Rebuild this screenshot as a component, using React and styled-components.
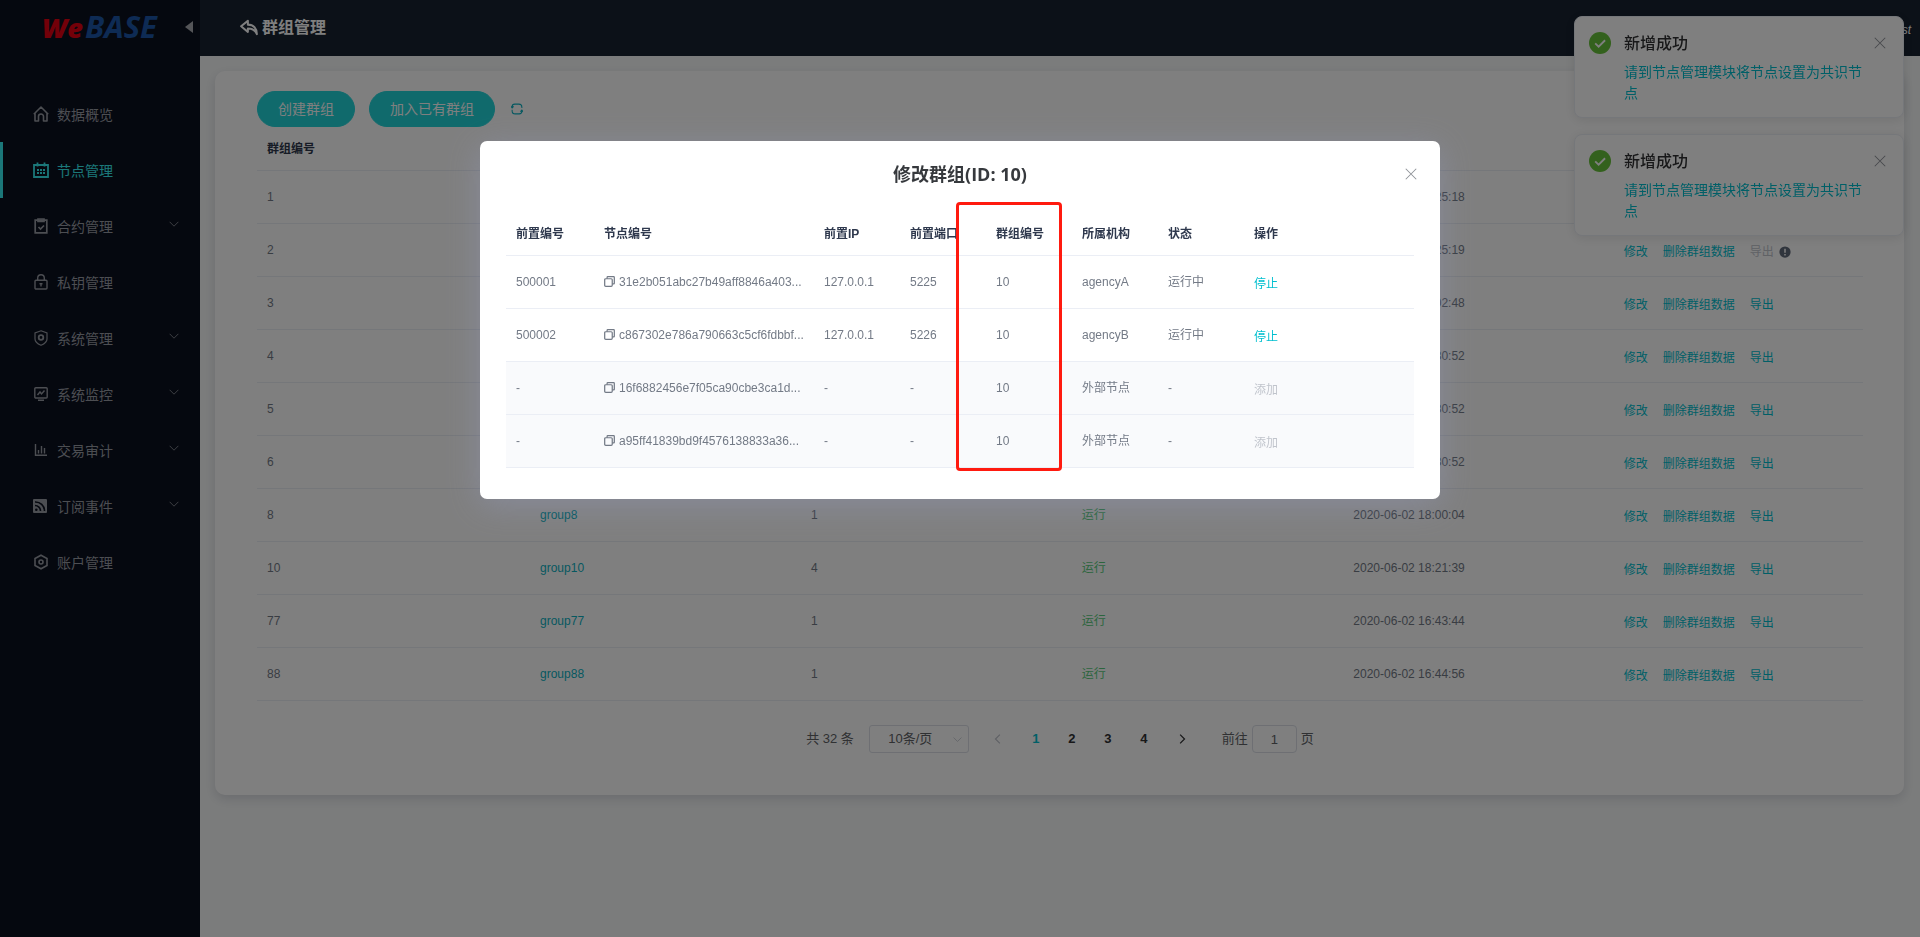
import React from 'react';
import styled, { createGlobalStyle } from 'styled-components';

const GlobalStyle = createGlobalStyle`
	* {
		box-sizing: border-box;
	}

	body {
		margin: 0;
		background: #f7f9f9;
		color: #36393d;
		font-family: 'Liberation Sans', 'Noto Sans CJK SC', sans-serif;
		font-size: 14px;
	}

	button,
	input,
	select {
		font-family: inherit;
		line-height: 20px;
	}

	a {
		text-decoration: none;
	}
`;

const Page = styled.div`
	display: flex;
	min-height: 100vh;
`;

const Sidebar = styled.aside`
	flex: 0 0 200px;
	background: #0a101e;
`;

const Brand = styled.div`
	display: flex;
	align-items: center;
	justify-content: space-between;
	height: 56px;
	padding: 0 7px 2px 40px;
`;

const Logo = styled.svg`
	display: block;
	width: 122px;
	height: 44px;
	font-family: 'Open Sans', sans-serif;
	font-style: italic;
`;

const CollapseButton = styled.button`
	display: flex;
	padding: 0;
	border: 0;
	background: none;
`;

const Menu = styled.nav`
	display: flex;
	flex-direction: column;
	padding-top: 30px;
`;

const MenuItem = styled.a`
	display: flex;
	align-items: center;
	height: 56px;
	padding: 0 21px 0 30px;
	border-left: 3px solid ${(props) => (props.$active ? '#37eef2' : 'transparent')};
	color: ${(props) => (props.$active ? '#37eef2' : '#999ca5')};

	svg {
		display: block;
	}
`;

const MenuLabel = styled.span`
	flex: 1;
	margin-left: 8px;
`;

const MenuArrow = styled.span`
	padding-bottom: 5px;
`;

const Main = styled.div`
	flex: 1;
	min-width: 0;
`;

const Header = styled.header`
	display: flex;
	align-items: center;
	justify-content: space-between;
	height: 56px;
	padding: 0 9px 0 40px;
	background: #182230;
	color: #fff;
`;

const HeaderTitle = styled.h1`
	display: flex;
	align-items: center;
	gap: 4px;
	margin: 0;
	font-size: 16px;
	font-weight: 700;
	line-height: 24px;
`;

const UserName = styled.span`
	padding-top: 3px;
	font-size: 12px;
	font-style: italic;
`;

const Card = styled.section`
	margin: 15px 16px 15px 15px;
	padding: 20px 41px 42px 42px;
	border-radius: 10px;
	background: #fff;
	box-shadow: 0 4px 12px rgba(20, 20, 60, 0.14);
`;

const Toolbar = styled.div`
	display: flex;
	align-items: center;
	gap: 14px;
`;

const RoundButton = styled.button`
	height: 36px;
	padding: 0 20px;
	border: 1px solid #20d4d9;
	border-radius: 20px;
	background: #20d4d9;
	color: #fff;
	font-size: 14px;
`;

const IconButton = styled.button`
	display: flex;
	padding: 2px;
	border: 0;
	background: none;
	color: ${(props) => props.$color || '#909399'};
`;

const Table = styled.table`
	width: 100%;
	border-collapse: separate;
	border-spacing: 0;
	table-layout: fixed;
	color: #737a86;
	font-size: 12px;
	line-height: 22px;
`;

const HeadCell = styled.th`
	height: ${(props) => (props.$short ? 42 : 44)}px;
	padding: 0 10px;
	border-bottom: 1px solid #ebeef5;
	color: #2e384d;
	font-weight: 700;
	text-align: left;
	white-space: nowrap;
`;

const Cell = styled.td`
	height: 53px;
	padding: 0 10px;
	border-bottom: 1px solid #ebeef5;
	white-space: nowrap;
`;

const Row = styled.tr`
	background: ${(props) => (props.$shaded ? '#f9fafc' : 'transparent')};
`;

const GroupLink = styled.a`
	color: #0db1c1;
`;

const Running = styled.span`
	color: #58cb7d;
`;

const TimeText = styled.span`
	display: inline-block;
	min-width: 112px;
	text-align: right;
`;

const Actions = styled.div`
	display: flex;
	align-items: center;
	gap: 15px;
	padding-top: 4px;
`;

const TextButton = styled.button`
	padding: 0;
	border: 0;
	background: none;
	color: #00bfcf;
	font-size: 12px;

	&:disabled {
		color: #c0c4cc;
	}
`;

const ExportGroup = styled.span`
	display: flex;
	align-items: center;
	gap: 5px;
`;

const Pager = styled.div`
	display: flex;
	align-items: center;
	justify-content: center;
	margin-top: 24px;
	color: #606266;
	font-size: 13px;
	line-height: 28px;
`;

const SizePicker = styled.span`
	display: grid;
	align-items: center;
	width: 100px;
	margin: 0 9px 0 15px;

	> * {
		grid-area: 1 / 1;
	}

	> svg {
		justify-self: end;
		margin-right: 7px;
	}
`;

const SizeSelect = styled.select`
	width: 100%;
	height: 28px;
	padding: 0 25px 0 8px;
	border: 1px solid #dcdfe6;
	border-radius: 3px;
	background: #fff;
	color: #606266;
	font-size: 13px;
	text-align: center;
	text-align-last: center;
	appearance: none;
`;

const PageButton = styled.button`
	display: flex;
	align-items: center;
	justify-content: center;
	width: ${(props) => (props.$arrow ? 40 : 36)}px;
	height: 28px;
	padding: 0;
	border: 0;
	background: none;
	color: ${(props) => (props.$active ? '#00bfcf' : '#303133')};
	font-size: 13px;
	font-weight: 700;

	&:disabled {
		color: #c0c4cc;
	}
`;

const Jumper = styled.label`
	display: flex;
	align-items: center;
	gap: 4px;
	margin-left: 20px;
`;

const JumperInput = styled.input`
	width: 45px;
	height: 28px;
	padding: 0 3px;
	border: 1px solid #dcdfe6;
	border-radius: 4px;
	background: #fff;
	color: #606266;
	font-size: 13px;
	text-align: center;
`;

const Notices = styled.div`
	position: fixed;
	top: 16px;
	right: 16px;
	display: flex;
	flex-direction: column;
	gap: 16px;
	width: 330px;
`;

const Notice = styled.div`
	display: flex;
	align-items: flex-start;
	padding: 15px 15px 13px 14px;
	border: 1px solid #ebeef5;
	border-radius: 8px;
	background: #fff;
	box-shadow: 0 2px 12px rgba(0, 0, 0, 0.1);
`;

const NoticeBody = styled.div`
	flex: 1;
	margin: 0 8px 0 13px;
`;

const NoticeTitle = styled.h2`
	margin: 0;
	color: #303133;
	font-size: 16px;
	font-weight: 500;
	line-height: 24px;
`;

const NoticeText = styled.p`
	margin: 6px 0 0;
	color: #00bfcf;
	font-size: 14px;
	line-height: 21px;
`;

const NoticeClose = styled(IconButton)`
	margin-top: 3px;
`;

const Overlay = styled.div`
	position: fixed;
	inset: 0;
	background: rgba(0, 0, 0, 0.5);
`;

const Dialog = styled.div`
	position: relative;
	width: 50%;
	margin: 15vh auto 0;
	padding: 20px 26px 31px;
	border-radius: 7px;
	background: #fff;
	box-shadow: 0 6px 32px rgba(160, 170, 220, 0.3);
`;

const DialogHeader = styled.div`
	display: grid;
	grid-template-columns: 16px 1fr 16px;
	align-items: center;
	height: 26px;
	margin: 0 -5px 27px;
`;

const DialogTitle = styled.h2`
	grid-column: 2;
	margin: 0;
	color: #36393d;
	font-family: 'Open Sans', 'Noto Sans CJK SC', sans-serif;
	font-size: 18px;
	font-weight: 700;
	line-height: 26px;
	text-align: center;
`;

const NodeId = styled.span`
	display: flex;
	align-items: center;
	gap: 4px;
`;

/* Marks the group id column, drawn over the dialog's table. */
const ColumnMark = styled.div`
	position: absolute;
	top: 61px;
	left: 476px;
	width: 106px;
	height: 269px;
	border: 3px solid #ff1a0f;
	border-radius: 4px;
`;

const Svg = ({ size = 16, children, ...rest }) => (
	<svg width={size} height={size} viewBox="0 0 16 16" fill="none" stroke="currentColor" strokeWidth="1.4" aria-hidden="true" {...rest}>
		{children}
	</svg>
);

const HomeIcon = () => (
	<Svg>
		<path d="M.8 8.200 8 1l7.200 7.200M2 7v8h3.500v-4.500a2.500 2.500 0 0 1 5 0V15H14V7" strokeLinejoin="round" strokeWidth="1.600" />
	</Svg>
);

const NodeIcon = () => (
	<Svg strokeWidth="1.800">
		<path d="M1 3h14v12H1zM4.500 .5v4M11.500 .5v4" />
		<path d="M4 8h2M7 8h2M10 8h2M4 11h2M7 11h2M10 11h2" strokeWidth="2" />
	</Svg>
);

const ContractIcon = () => (
	<Svg>
		<path d="M2.200 2.200h11.600v12.600H2.200z" strokeWidth="1.700" />
		<path d="M5 1h6v2.500H5zM5.500 9l2 2 3.500-3.500" strokeWidth="1.700" />
	</Svg>
);

const KeyIcon = () => (
	<Svg>
		<rect x="2" y="6.300" width="12" height="8.700" rx="1" />
		<path d="M4.700 6.500V4a3.300 3.300 0 0 1 6.600 0v2.500M6.500 9.700h3M8 9.500v3" />
	</Svg>
);

const ShieldIcon = () => (
	<Svg strokeWidth="1.200">
		<path d="M8 .8 14 3v6c0 3-3 5-6 6.300C5 14 2 12 2 9V3z" />
		<circle cx="8" cy="7.500" r="2.300" strokeWidth="1.800" />
	</Svg>
);

const MonitorIcon = () => (
	<Svg>
		<rect x="1.800" y="1.700" width="12.400" height="10.300" rx="1" />
		<path d="M4.500 9 7 6l1.500 2L11.500 4.500M5 14.300h6" />
	</Svg>
);

const AuditIcon = () => (
	<Svg>
		<path d="M2.500 2v11.300H14M5.500 11.500V8M8.500 11.500V4M11.500 11.500V6" />
	</Svg>
);

const FeedIcon = () => (
	<Svg stroke="none">
		<rect x="0" y="1" width="14" height="14" rx="1" fill="currentColor" />
		<circle cx="3.300" cy="11.800" r="1.300" fill="#0a101e" />
		<path d="M2 7.500a5.500 5.500 0 0 1 5.500 5.500M2 4a9 9 0 0 1 9.500 9" stroke="#0a101e" strokeWidth="1.600" />
	</Svg>
);

const AccountIcon = () => (
	<Svg>
		<path d="M8 1.200 14 4.500v7L8 14.800 2 11.500v-7z" strokeWidth="1.600" />
		<circle cx="8" cy="8" r="2" strokeWidth="1.600" />
	</Svg>
);

const ChevronDown = ({ size = 10, color = '#8b8e96' }) => (
	<Svg size={size} stroke={color}>
		<path d="m1 4.500 7 7 7-7" />
	</Svg>
);

const BackIcon = () => (
	<Svg size={18}>
		<path d="M7 1.500 1 6.500l6 5V8.500c4 0 6.500 1.500 8 5 0-5-3-8.500-8-8.500z" strokeLinejoin="round" strokeWidth="1.800" />
	</Svg>
);

const RefreshIcon = () => (
	<Svg size={12} strokeWidth="1.400">
		<path d="M1.500 6.500V5q0-3.500 3.500-3.500h5.500a4 4 0 0 1 4 4v1M14.500 9.500V11q0 3.500-3.500 3.500H5.500a4 4 0 0 1-4-4V9M0 4.500l1.500 2 2-2M16 11.500l-1.500-2-2 2" />
	</Svg>
);

const CloseIcon = () => (
	<Svg size={12}>
		<path d="m1 1 14 14M15 1 1 15" />
	</Svg>
);

const CopyIcon = () => (
	<Svg size={11} stroke="#737a86" strokeWidth="1.800">
		<rect x="1" y="4" width="11" height="11" rx="1.500" />
		<path d="M4.500 4V2q0-1 1-1h8.500q1 0 1 1v8.500q0 1-1 1h-2" />
	</Svg>
);

const SuccessIcon = () => (
	<Svg size={22} stroke="none">
		<circle cx="8" cy="8" r="8" fill="#67c23a" />
		<path d="m4.500 8.200 2.500 2.500 4.700-4.700" stroke="#fff" strokeWidth="1.300" />
	</Svg>
);

const WarnIcon = () => (
	<Svg size={12} stroke="none">
		<circle cx="8" cy="8" r="7.500" fill="#606a7a" />
		<path d="M8 3.500v5.500M8 10.500v2" stroke="#fff" strokeWidth="2" />
	</Svg>
);

const menu = [
	{ label: '数据概览', Icon: HomeIcon },
	{ label: '节点管理', Icon: NodeIcon, active: true },
	{ label: '合约管理', Icon: ContractIcon, nested: true },
	{ label: '私钥管理', Icon: KeyIcon },
	{ label: '系统管理', Icon: ShieldIcon, nested: true },
	{ label: '系统监控', Icon: MonitorIcon, nested: true },
	{ label: '交易审计', Icon: AuditIcon, nested: true },
	{ label: '订阅事件', Icon: FeedIcon, nested: true },
	{ label: '账户管理', Icon: AccountIcon },
];

/* Rows 1 to 6 sit behind the dialog, which leaves only the end of the time in view. */
const groups = [
	{ id: 1, time: '25:18' },
	{ id: 2, time: '25:19', locked: true },
	{ id: 3, time: '02:48' },
	{ id: 4, time: '30:52' },
	{ id: 5, time: '30:52' },
	{ id: 6, time: '30:52' },
	{ id: 8, name: 'group8', nodes: 1, time: '2020-06-02 18:00:04' },
	{ id: 10, name: 'group10', nodes: 4, time: '2020-06-02 18:21:39' },
	{ id: 77, name: 'group77', nodes: 1, time: '2020-06-02 16:43:44' },
	{ id: 88, name: 'group88', nodes: 1, time: '2020-06-02 16:44:56' },
];

const nodes = [
	{ front: '500001', node: '31e2b051abc27b49aff8846a403...', ip: '127.0.0.1', port: '5225', agency: 'agencyA', status: '运行中', action: '停止' },
	{ front: '500002', node: 'c867302e786a790663c5cf6fdbbf...', ip: '127.0.0.1', port: '5226', agency: 'agencyB', status: '运行中', action: '停止' },
	{ front: '-', node: '16f6882456e7f05ca90cbe3ca1d...', ip: '-', port: '-', agency: '外部节点', status: '-', action: '添加', external: true },
	{ front: '-', node: 'a95ff41839bd9f4576138833a36...', ip: '-', port: '-', agency: '外部节点', status: '-', action: '添加', external: true },
];

const SideNav = () => (
	<Sidebar>
		<Brand>
			<Logo viewBox="0 0 122 44" role="img" aria-label="WeBASE">
				<text x="2" y="33" fill="#e60012" fontSize="27" fontWeight="800">
					We
				</text>
				<text x="45" y="33" fill="#1c57a8" fontSize="31" fontWeight="700">
					BASE
				</text>
			</Logo>
			<CollapseButton aria-label="收起">
				<svg width="8" height="12" viewBox="0 0 8 12" aria-hidden="true">
					<path d="M8 0v12L0 6z" fill="#a9abb0" />
				</svg>
			</CollapseButton>
		</Brand>
		<Menu>
			{menu.map(({ label, Icon, active, nested }) => (
				<MenuItem key={label} href="#" $active={active}>
					<Icon />
					<MenuLabel>{label}</MenuLabel>
					{nested && (
						<MenuArrow>
							<ChevronDown />
						</MenuArrow>
					)}
				</MenuItem>
			))}
		</Menu>
	</Sidebar>
);

const GroupTable = () => (
	<Table>
		<colgroup>
			<col style={{ width: '17%' }} />
			<col style={{ width: '16.87%' }} />
			<col style={{ width: '16.87%' }} />
			<col style={{ width: '16.87%' }} />
			<col style={{ width: '16.87%' }} />
			<col />
		</colgroup>
		<thead>
			<tr>
				<HeadCell>群组编号</HeadCell>
				<HeadCell colSpan={5} />
			</tr>
		</thead>
		<tbody>
			{groups.map((group) => (
				<tr key={group.id}>
					<Cell>{group.id}</Cell>
					<Cell>{group.name && <GroupLink href="#">{group.name}</GroupLink>}</Cell>
					<Cell>{group.nodes}</Cell>
					<Cell>{group.name && <Running>运行</Running>}</Cell>
					<Cell>
						<TimeText>{group.time}</TimeText>
					</Cell>
					<Cell>
						{group.id !== 1 && (
							<Actions>
								<TextButton>修改</TextButton>
								<TextButton>删除群组数据</TextButton>
								<ExportGroup>
									<TextButton disabled={group.locked}>导出</TextButton>
									{group.locked && <WarnIcon />}
								</ExportGroup>
							</Actions>
						)}
					</Cell>
				</tr>
			))}
		</tbody>
	</Table>
);

const Pagination = () => (
	<Pager>
		<span>共 32 条</span>
		<SizePicker>
			<SizeSelect aria-label="每页条数" defaultValue="10">
				<option value="10">10条/页</option>
			</SizeSelect>
			<ChevronDown size={9} color="#c0c4cc" />
		</SizePicker>
		<PageButton $arrow disabled aria-label="上一页">
			<Svg size={10} strokeWidth="2">
				<path d="M11 1 4 8l7 7" />
			</Svg>
		</PageButton>
		{[1, 2, 3, 4].map((page) => (
			<PageButton key={page} $active={page === 1}>
				{page}
			</PageButton>
		))}
		<PageButton $arrow aria-label="下一页">
			<Svg size={10} strokeWidth="2">
				<path d="m5 1 7 7-7 7" />
			</Svg>
		</PageButton>
		<Jumper>
			前往
			<JumperInput defaultValue="1" />
			页
		</Jumper>
	</Pager>
);

const SuccessNotice = () => (
	<Notice role="alert">
		<SuccessIcon />
		<NoticeBody>
			<NoticeTitle>新增成功</NoticeTitle>
			<NoticeText>请到节点管理模块将节点设置为共识节点</NoticeText>
		</NoticeBody>
		<NoticeClose aria-label="关闭">
			<CloseIcon />
		</NoticeClose>
	</Notice>
);

const GroupDialog = () => (
	<Dialog role="dialog" aria-modal="true" aria-labelledby="dialog-title">
		<DialogHeader>
			<DialogTitle id="dialog-title">修改群组(ID: 10)</DialogTitle>
			<IconButton aria-label="关闭">
				<CloseIcon />
			</IconButton>
		</DialogHeader>
		<Table>
			<colgroup>
				<col style={{ width: 88 }} />
				<col style={{ width: 220 }} />
				<col style={{ width: 86 }} />
				<col style={{ width: 86 }} />
				<col style={{ width: 86 }} />
				<col style={{ width: 86 }} />
				<col style={{ width: 86 }} />
				<col />
			</colgroup>
			<thead>
				<tr>
					{['前置编号', '节点编号', '前置IP', '前置端口', '群组编号', '所属机构', '状态', '操作'].map((title) => (
						<HeadCell key={title} $short>
							{title}
						</HeadCell>
					))}
				</tr>
			</thead>
			<tbody>
				{nodes.map((item) => (
					<Row key={item.node} $shaded={item.external}>
						<Cell>{item.front}</Cell>
						<Cell>
							<NodeId>
								<CopyIcon />
								{item.node}
							</NodeId>
						</Cell>
						<Cell>{item.ip}</Cell>
						<Cell>{item.port}</Cell>
						<Cell>10</Cell>
						<Cell>{item.agency}</Cell>
						<Cell>{item.status}</Cell>
						<Cell>
							<Actions>
								<TextButton disabled={item.external}>{item.action}</TextButton>
							</Actions>
						</Cell>
					</Row>
				))}
			</tbody>
		</Table>
		<ColumnMark />
	</Dialog>
);

const App = () => (
	<>
		<GlobalStyle />
		<Page>
			<SideNav />
			<Main>
				<Header>
					<HeaderTitle>
						<BackIcon />
						群组管理
					</HeaderTitle>
					<UserName>st</UserName>
				</Header>
				<Card>
					<Toolbar>
						<RoundButton>创建群组</RoundButton>
						<RoundButton>加入已有群组</RoundButton>
						<IconButton $color="#0db1c1" aria-label="刷新">
							<RefreshIcon />
						</IconButton>
					</Toolbar>
					<GroupTable />
					<Pagination />
				</Card>
			</Main>
		</Page>
		<Notices>
			<SuccessNotice />
			<SuccessNotice />
		</Notices>
		<Overlay>
			<GroupDialog />
		</Overlay>
	</>
);

export default App;
